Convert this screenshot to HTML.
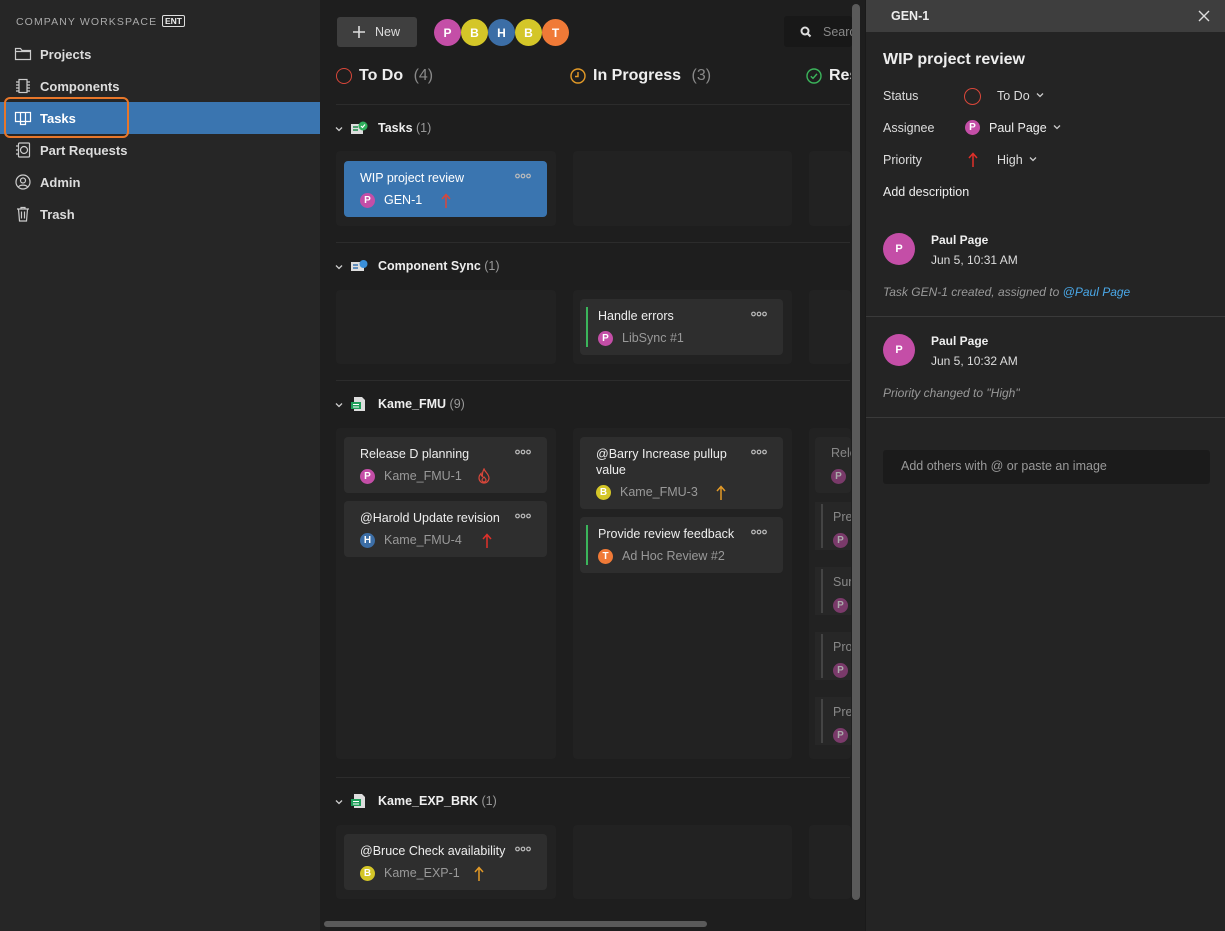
<!DOCTYPE html>
<html><head><meta charset="utf-8"><style>
*{box-sizing:border-box;margin:0;padding:0}
body{width:1225px;height:931px;background:#1e1e1e;font-family:"Liberation Sans",sans-serif;color:#e6e6e6;position:relative;overflow:hidden;font-size:13px}
.a{position:absolute}
#side{left:0;top:0;width:320px;height:931px;background:#262626}
.nav{position:absolute;left:0;width:320px;height:32px;display:flex;align-items:center;padding-left:40px;font-size:13px;font-weight:bold;color:#ddd}
.nav svg{position:absolute;left:14px;top:8px}
.lane{position:absolute;background:#222;border-radius:4px}
.card{position:absolute;background:#2e2e2e;border-radius:4px;width:203px}
.ct{position:absolute;left:16px;top:9px;font-size:12.5px;color:#eee;line-height:16px}
.dots{position:absolute;right:16px;top:12px;width:16px;height:6px}
.av{position:absolute;border-radius:50%;color:#fff;font-weight:bold;display:flex;align-items:center;justify-content:center}
.sm{width:15px;height:15px;font-size:10px}
.cid{position:absolute;font-size:12.5px;color:#999}
.sec{position:absolute;left:336px;font-size:12.5px;font-weight:bold;color:#eee}
.sec .n{color:#999;font-weight:normal}
.div{position:absolute;left:336px;width:514px;height:1px;background:#2c2c2c}
.chev{position:absolute;left:335px;width:8px;height:8px}
#panel{left:865px;top:0;width:360px;height:931px;background:#242424;border-left:1px solid #1a1a1a}
.lab{position:absolute;left:17px;font-size:12.5px;color:#ddd}
.ar{position:absolute;width:10px;height:16px}
.dd{display:inline-block;width:8px;height:8px;margin-left:6px;vertical-align:1px}
</style></head><body>
<svg width="0" height="0" style="position:absolute"><defs>
<symbol id="dots" viewBox="0 0 16 6"><g fill="none" stroke="#bbb" stroke-width="1.2"><circle cx="2.5" cy="3" r="1.8"/><circle cx="8" cy="3" r="1.8"/><circle cx="13.5" cy="3" r="1.8"/></g></symbol>
<symbol id="arrow" viewBox="0 0 10 16"><path d="M5 15V2M1 6l4-4.5L9 6" fill="none" stroke="currentColor" stroke-width="1.5"/></symbol>
<symbol id="chev" viewBox="0 0 8 8"><path d="M1 2.5l3 3 3-3" fill="none" stroke="#ccc" stroke-width="1.3"/></symbol>
</defs></svg>
<div id="side" class="a">
 <div class="a" style="left:16px;top:16px;font-size:10.5px;letter-spacing:1.1px;color:#aaa">COMPANY WORKSPACE</div>
 <div class="a" style="left:162px;top:15px;border:1px solid #ddd;border-radius:2px;font-size:8.5px;font-weight:bold;padding:0 2px;color:#eee;line-height:10px">ENT</div>
 <div class="nav" style="top:38px"><svg width="18" height="16" viewBox="0 0 18 16" fill="none" stroke="#ccc" stroke-width="1.2"><path d="M1.5 2.5h5l1.5 2h8.5v9h-15z M1.5 5.5h15"/></svg>Projects</div>
 <div class="nav" style="top:70px"><svg width="18" height="16" viewBox="0 0 18 16" fill="none" stroke="#ccc" stroke-width="1.2"><rect x="5" y="1.5" width="8" height="13"/><path d="M2 4h3M2 7h3M2 10h3M2 13h3M13 4h3M13 7h3M13 10h3M13 13h3"/></svg>Components</div>
 <div class="nav" style="top:102px;background:#3a75b0;color:#fff"><svg width="18" height="16" viewBox="0 0 18 16" fill="none" stroke="#fff" stroke-width="1.2"><path d="M1.5 2.5h15v9h-15z M6.5 2.5v12h5v-12"/></svg>Tasks</div>
 <div class="a" style="left:4px;top:97px;width:125px;height:41px;border:2px solid #e8772a;border-radius:6px"></div>
 <div class="nav" style="top:134px"><svg width="18" height="16" viewBox="0 0 18 16" fill="none" stroke="#ccc" stroke-width="1.2"><rect x="4.5" y="1" width="11" height="14" rx="1"/><circle cx="10" cy="8" r="3.5"/><path d="M2 4h2.5M2 8h2.5M2 12h2.5"/></svg>Part Requests</div>
 <div class="nav" style="top:166px"><svg width="18" height="16" viewBox="0 0 18 16" fill="none" stroke="#ccc" stroke-width="1.2"><circle cx="9" cy="8" r="7"/><circle cx="9" cy="6.5" r="2.5"/><path d="M4.5 13c1.5-2.5 7.5-2.5 9 0"/></svg>Admin</div>
 <div class="nav" style="top:198px"><svg width="18" height="16" viewBox="0 0 18 16" fill="none" stroke="#ccc" stroke-width="1.2"><path d="M3 3h12M7 3V1.5h4V3M4.5 3l1 12h7l1-12M7.5 5.5v7M10.5 5.5v7"/></svg>Trash</div>
</div>

<div class="a" style="left:337px;top:17px;width:80px;height:30px;background:#3f3f3f;border-radius:3px;font-size:12.5px;color:#ddd;padding:8px 0 0 38px">New</div>
<svg class="a" style="left:352px;top:25px" width="14" height="14" viewBox="0 0 14 14"><path d="M7 1v12M1 7h12" stroke="#ddd" stroke-width="1.6"/></svg>
<div class="av" style="left:434px;top:19px;width:27px;height:27px;background:#c44ea7;font-size:12px">P</div>
<div class="av" style="left:461px;top:19px;width:27px;height:27px;background:#d4c628;font-size:12px">B</div>
<div class="av" style="left:488px;top:19px;width:27px;height:27px;background:#3c6ea6;font-size:12px">H</div>
<div class="av" style="left:515px;top:19px;width:27px;height:27px;background:#d4c628;font-size:12px">B</div>
<div class="av" style="left:542px;top:19px;width:27px;height:27px;background:#f07a37;font-size:12px">T</div>
<div class="a" style="left:784px;top:16px;width:68px;height:31px;background:#181818;border-radius:3px;overflow:hidden"><svg class="a" style="left:16px;top:10px" width="12" height="12" viewBox="0 0 12 12" fill="none" stroke="#ddd" stroke-width="2"><circle cx="5" cy="5" r="3.5"/><path d="M7.5 7.5l3 3"/></svg><span class="a" style="left:39px;top:9px;color:#888;font-size:12.5px">Search</span></div>

<div class="a" style="left:336px;top:68px;width:16px;height:16px;border:1.5px solid #d9473a;border-radius:50%"></div>
<div class="a" style="left:359px;top:67px;font-size:16px;font-weight:bold;color:#eee">To Do <span style="color:#888;font-weight:normal;margin-left:6px">(4)</span></div>
<svg class="a" style="left:570px;top:68px" width="16" height="16" viewBox="0 0 16 16" fill="none" stroke="#e39a27" stroke-width="1.4"><circle cx="8" cy="8" r="7"/><path d="M8 4v4.5H5"/></svg>
<div class="a" style="left:593px;top:67px;font-size:16px;font-weight:bold;color:#eee">In Progress <span style="color:#888;font-weight:normal;margin-left:6px">(3)</span></div>
<svg class="a" style="left:806px;top:68px" width="16" height="16" viewBox="0 0 16 16" fill="none" stroke="#3bb55b" stroke-width="1.4"><circle cx="8" cy="8" r="7"/><path d="M4.8 8.2l2.2 2.2 4-4.5"/></svg>
<div class="a" style="left:829px;top:67px;font-size:16px;font-weight:bold;color:#eee;width:22px;overflow:hidden;white-space:nowrap">Resolved</div>
<div class="div" style="top:104px"></div>

<svg class="chev" style="top:125px"><use href="#chev"/></svg>
<svg class="a" style="left:351px;top:121px" width="17" height="14" viewBox="0 0 17 14"><rect x="0" y="3" width="12" height="10" fill="#ddd"/><path d="M2 6h5M2 9h5" stroke="#1f8a4c" stroke-width="1.4"/><circle cx="12" cy="5" r="4.5" fill="#2fae5c"/><path d="M10 5l1.5 1.5 2.5-3" stroke="#fff" stroke-width="1.2" fill="none"/></svg>
<div class="sec" style="left:378px;top:121px">Tasks <span class="n">(1)</span></div>
<div class="lane" style="left:336px;top:151px;width:220px;height:75px"></div>
<div class="lane" style="left:573px;top:151px;width:219px;height:75px"></div>
<div class="lane" style="left:809px;top:151px;width:42px;height:75px"></div>
<div class="card" style="left:344px;top:161px;height:56px;background:#3a75b0"><div class="ct" style="color:#fff">WIP project review</div><svg class="dots"><use href="#dots"/></svg>
 <div class="av sm" style="left:16px;top:32px;background:#c44ea7">P</div><div class="cid" style="left:40px;top:32px;color:#fff">GEN-1</div><svg class="ar" style="left:97px;top:32px;color:#d9473a"><use href="#arrow"/></svg></div>

<div class="div" style="top:242px"></div>
<svg class="chev" style="top:263px"><use href="#chev"/></svg>
<svg class="a" style="left:351px;top:259px" width="17" height="14" viewBox="0 0 17 14"><rect x="0" y="3" width="13" height="9" fill="#ddd"/><path d="M2 6h5M2 9h5" stroke="#3a75b0" stroke-width="1.4"/><circle cx="12.5" cy="5" r="4" fill="#3a8fd9"/></svg>
<div class="sec" style="left:378px;top:259px">Component Sync <span class="n">(1)</span></div>
<div class="lane" style="left:336px;top:290px;width:220px;height:74px"></div>
<div class="lane" style="left:573px;top:290px;width:219px;height:74px"></div>
<div class="lane" style="left:809px;top:290px;width:42px;height:74px"></div>
<div class="card" style="left:580px;top:299px;height:56px"><div class="a" style="left:6px;top:8px;width:2px;height:40px;background:#3bb55b"></div><div class="ct" style="left:18px">Handle errors</div><svg class="dots"><use href="#dots"/></svg>
 <div class="av sm" style="left:18px;top:32px;background:#c44ea7">P</div><div class="cid" style="left:42px;top:32px">LibSync #1</div></div>

<div class="div" style="top:380px"></div>
<svg class="chev" style="top:401px"><use href="#chev"/></svg>
<svg class="a" style="left:351px;top:396px" width="17" height="16" viewBox="0 0 17 16"><path d="M3 1h8l3 3v11H3z" fill="#ddd"/><rect x="0" y="6" width="10" height="7" fill="#1f9e5a"/><path d="M2 8.5h6M2 11h6" stroke="#fff" stroke-width="1"/></svg>
<div class="sec" style="left:378px;top:397px">Kame_FMU <span class="n">(9)</span></div>
<div class="lane" style="left:336px;top:428px;width:220px;height:331px"></div>
<div class="lane" style="left:573px;top:428px;width:219px;height:331px"></div>
<div class="lane" style="left:809px;top:428px;width:42px;height:331px"></div>
<div class="card" style="left:344px;top:437px;height:56px"><div class="ct">Release D planning</div><svg class="dots"><use href="#dots"/></svg>
 <div class="av sm" style="left:16px;top:32px;background:#c44ea7">P</div><div class="cid" style="left:40px;top:32px">Kame_FMU-1</div>
 <svg class="a" style="left:134px;top:31px" width="12" height="16" viewBox="0 0 12 16" fill="none" stroke="#d9473a" stroke-width="1.2"><path d="M6 1C7 4 11 6 11 10a5 5 0 0 1-10 0c0-2 1-3.5 2-4.5 0 1.5.5 2.5 1.5 3C4 6 5 3 6 1z"/><path d="M6 9c1 1 2 2 2 3a2 2 0 0 1-4 0c0-1 1-2 2-3z"/></svg></div>
<div class="card" style="left:344px;top:501px;height:56px"><div class="ct">@Harold Update revision</div><svg class="dots"><use href="#dots"/></svg>
 <div class="av sm" style="left:16px;top:32px;background:#3c6ea6">H</div><div class="cid" style="left:40px;top:32px">Kame_FMU-4</div><svg class="ar" style="left:138px;top:32px;color:#e0302a"><use href="#arrow"/></svg></div>
<div class="card" style="left:580px;top:437px;height:72px"><div class="ct" style="width:150px">@Barry Increase pullup value</div><svg class="dots"><use href="#dots"/></svg>
 <div class="av sm" style="left:16px;top:48px;background:#d4c628">B</div><div class="cid" style="left:40px;top:48px">Kame_FMU-3</div><svg class="ar" style="left:136px;top:48px;color:#e39a27"><use href="#arrow"/></svg></div>
<div class="card" style="left:580px;top:517px;height:56px"><div class="a" style="left:6px;top:8px;width:2px;height:40px;background:#3bb55b"></div><div class="ct" style="left:18px">Provide review feedback</div><svg class="dots"><use href="#dots"/></svg>
 <div class="av sm" style="left:18px;top:32px;background:#f07a37">T</div><div class="cid" style="left:42px;top:32px">Ad Hoc Review #2</div></div>
<div class="a" style="left:815px;top:437px;width:36px;height:56px;background:#272727;border-radius:4px;overflow:hidden"><span class="a" style="left:16px;top:9px;color:#888;font-size:12.5px">Release</span><div class="av sm" style="left:16px;top:32px;background:#7a3a6a;color:#aaa">P</div></div>
<div class="a" style="left:815px;top:502px;width:36px;height:48px;background:#272727;overflow:hidden"><div class="a" style="left:6px;top:2px;width:2px;height:44px;background:#444"></div><span class="a" style="left:18px;top:8px;color:#888;font-size:12.5px">Prepare</span><div class="av sm" style="left:18px;top:31px;background:#7a3a6a;color:#aaa">P</div></div>
<div class="a" style="left:815px;top:567px;width:36px;height:48px;background:#272727;overflow:hidden"><div class="a" style="left:6px;top:2px;width:2px;height:44px;background:#444"></div><span class="a" style="left:18px;top:8px;color:#888;font-size:12.5px">Summary</span><div class="av sm" style="left:18px;top:31px;background:#7a3a6a;color:#aaa">P</div></div>
<div class="a" style="left:815px;top:632px;width:36px;height:48px;background:#272727;overflow:hidden"><div class="a" style="left:6px;top:2px;width:2px;height:44px;background:#444"></div><span class="a" style="left:18px;top:8px;color:#888;font-size:12.5px">Provide</span><div class="av sm" style="left:18px;top:31px;background:#7a3a6a;color:#aaa">P</div></div>
<div class="a" style="left:815px;top:697px;width:36px;height:48px;background:#272727;overflow:hidden"><div class="a" style="left:6px;top:2px;width:2px;height:44px;background:#444"></div><span class="a" style="left:18px;top:8px;color:#888;font-size:12.5px">Prepare</span><div class="av sm" style="left:18px;top:31px;background:#7a3a6a;color:#aaa">P</div></div>

<div class="div" style="top:777px"></div>
<svg class="chev" style="top:798px"><use href="#chev"/></svg>
<svg class="a" style="left:351px;top:793px" width="17" height="16" viewBox="0 0 17 16"><path d="M3 1h8l3 3v11H3z" fill="#ddd"/><rect x="0" y="6" width="10" height="7" fill="#1f9e5a"/><path d="M2 8.5h6M2 11h6" stroke="#fff" stroke-width="1"/></svg>
<div class="sec" style="left:378px;top:794px">Kame_EXP_BRK <span class="n">(1)</span></div>
<div class="lane" style="left:336px;top:825px;width:220px;height:74px"></div>
<div class="lane" style="left:573px;top:825px;width:219px;height:74px"></div>
<div class="lane" style="left:809px;top:825px;width:42px;height:74px"></div>
<div class="card" style="left:344px;top:834px;height:56px"><div class="ct">@Bruce Check availability</div><svg class="dots"><use href="#dots"/></svg>
 <div class="av sm" style="left:16px;top:32px;background:#d4c628">B</div><div class="cid" style="left:40px;top:32px">Kame_EXP-1</div><svg class="ar" style="left:130px;top:32px;color:#e39a27"><use href="#arrow"/></svg></div>

<div class="a" style="left:852px;top:4px;width:8px;height:896px;background:#5a5a5a;border-radius:4px"></div>
<div class="a" style="left:324px;top:921px;width:383px;height:6px;background:#5a5a5a;border-radius:3px"></div>

<div id="panel" class="a">
 <div class="a" style="left:0;top:0;width:360px;height:32px;background:#3e3e3e"></div>
 <div class="a" style="left:25px;top:9px;font-size:12.5px;font-weight:bold;color:#eee">GEN-1</div>
 <svg class="a" style="left:332px;top:10px" width="12" height="12" viewBox="0 0 12 12"><path d="M1 1l10 10M11 1L1 11" stroke="#ddd" stroke-width="1.4"/></svg>
 <div class="a" style="left:17px;top:51px;font-size:16px;font-weight:bold;color:#eee">WIP project review</div>
 <div class="lab" style="top:89px">Status</div>
 <div class="a" style="left:98px;top:88px;width:17px;height:17px;border:1.5px solid #d9473a;border-radius:50%"></div>
 <div class="lab" style="left:131px;top:89px">To Do<svg class="dd"><use href="#chev"/></svg></div>
 <div class="lab" style="top:121px">Assignee</div>
 <div class="av sm" style="left:99px;top:120px;background:#c44ea7">P</div>
 <div class="lab" style="left:123px;top:121px;color:#eee">Paul Page<svg class="dd"><use href="#chev"/></svg></div>
 <div class="lab" style="top:153px">Priority</div>
 <svg class="ar" style="left:102px;top:152px;color:#e0302a"><use href="#arrow"/></svg>
 <div class="lab" style="left:131px;top:153px">High<svg class="dd"><use href="#chev"/></svg></div>
 <div class="lab" style="top:185px;color:#eee">Add description</div>
 <div class="av" style="left:17px;top:233px;width:32px;height:32px;background:#c44ea7;font-size:11px">P</div>
 <div class="a" style="left:65px;top:233px;font-size:12px;font-weight:bold;color:#eee">Paul Page</div>
 <div class="a" style="left:65px;top:253px;font-size:12px;color:#ddd">Jun 5, 10:31 AM</div>
 <div class="a" style="left:17px;top:285px;font-size:12px;color:#999;font-style:italic">Task GEN-1 created, assigned to <span style="color:#4aa8e8">@Paul Page</span></div>
 <div class="a" style="left:0;top:316px;width:360px;height:1px;background:#3a3a3a"></div>
 <div class="av" style="left:17px;top:334px;width:32px;height:32px;background:#c44ea7;font-size:11px">P</div>
 <div class="a" style="left:65px;top:334px;font-size:12px;font-weight:bold;color:#eee">Paul Page</div>
 <div class="a" style="left:65px;top:354px;font-size:12px;color:#ddd">Jun 5, 10:32 AM</div>
 <div class="a" style="left:17px;top:386px;font-size:12px;color:#999;font-style:italic">Priority changed to "High"</div>
 <div class="a" style="left:0;top:417px;width:360px;height:1px;background:#3a3a3a"></div>
 <div class="a" style="left:17px;top:450px;width:327px;height:34px;background:#1b1b1b;border-radius:3px;padding:9px 0 0 18px;font-size:12.5px;color:#999">Add others with @ or paste an image</div>
</div>
</body></html>
